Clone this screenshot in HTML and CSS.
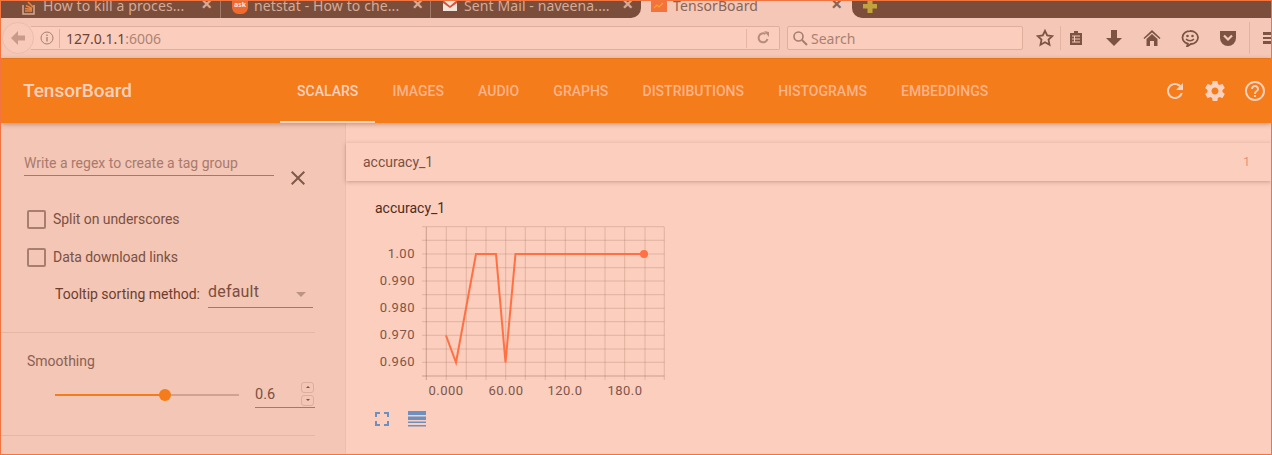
FILE: index.html
```html
<!DOCTYPE html>
<html lang="en">
<head>
    <meta charset="UTF-8">
    <title>TensorBoard</title>
    <link rel="stylesheet" href="styles.css">
</head>
<body>
<div class="window">
    <!-- browser tabs -->
    <div class="tabstrip">
        <div class="tabs-back">
            <div class="tab tab-first">
                <svg class="favicon" viewBox="0 0 16 16"><path d="M2 5v9h11V5" fill="none" stroke="#d9a98f" stroke-width="1.5"/><path d="M4 11h7M4 8.5l7 1M5 5.500l6 3M7 2l5 5" fill="none" stroke="#e8853f" stroke-width="1.500"/></svg>
                <span class="tab-title">How to kill a proces...</span>
                <span class="tab-close">×</span>
            </div>
            <div class="tab">
                <svg class="favicon" viewBox="0 0 16 16"><path d="M0 -3h16v11a7 7 0 0 1-8 6a7 7 0 0 1-8-6z" fill="#ef6a2c"/><text x="8" y="7" class="ask-text">ask</text></svg>
                <span class="tab-title">netstat - How to che...</span>
                <span class="tab-close">×</span>
            </div>
            <div class="tab tab-last">
                <svg class="favicon" viewBox="0 0 16 16"><rect x="1" y="0" width="14" height="11" fill="#f4e3d8"/><path d="M1 0l7 6 7-6v3l-7 5-7-5z" fill="#d9503c"/></svg>
                <span class="tab-title">Sent Mail - naveena....</span>
                <span class="tab-close">×</span>
            </div>
        </div>
        <div class="tab tab-active">
            <svg class="favicon" viewBox="0 0 16 16"><rect width="16" height="12" fill="#f4723c"/><path d="M3 8l3-3 2 2 4-4" fill="none" stroke="#f5a623" stroke-width="1.200"/></svg>
            <span class="tab-title">TensorBoard</span>
            <span class="tab-close">×</span>
        </div>
        <div class="tabs-rest">
            <svg class="new-tab" viewBox="0 0 14 12"><path d="M4.500 0h5v3H14v4.500H9.500V12h-5V7.500H0V3h4.500z" fill="#c2a23c"/></svg>
        </div>
    </div>

    <!-- browser toolbar -->
    <div class="toolbar">
        <div class="back-btn">
            <svg viewBox="0 0 18 18" width="18" height="18"><path d="M9 2L2 9l7 7v-4.500h7v-5H9z" fill="#c99a89"/></svg>
        </div>
        <div class="urlbar">
            <svg class="info-icon" viewBox="0 0 14 14" width="14" height="14"><circle cx="7" cy="7" r="6" fill="none" stroke="#a57e70"/><path d="M7 6v4.500M7 3.500v1.500" stroke="#a57e70" stroke-width="1.300"/></svg>
            <span class="url"><b>127.0.1.1</b>:6006</span>
            <span class="url-reload">
                <svg viewBox="0 0 14 14" width="14" height="14"><path d="M11.500 8a4.500 4.500 0 1 1-2-5" fill="none" stroke="#b58c7d" stroke-width="2"/><path d="M8 0l5 1v5z" fill="#b58c7d"/></svg>
            </span>
        </div>
        <div class="searchbar">
            <svg viewBox="0 0 16 16" width="16" height="16"><circle cx="6.500" cy="6.500" r="4.500" fill="none" stroke="#a57e70" stroke-width="1.600"/><path d="M10 10l5 5" stroke="#a57e70" stroke-width="2"/></svg>
            <span>Search</span>
        </div>
        <div class="tool-icons">
            <svg class="ti ti-star" viewBox="0 0 18 18"><path d="M9 1.800l2.200 4.700 5 .6-3.700 3.500 1 5.100L9 13.200l-4.500 2.500 1-5.100L1.800 7.100l5-.6z" fill="none" stroke="#7d5444" stroke-width="1.800"/></svg>
            <span class="tool-sep"></span>
            <svg class="ti ti-list" viewBox="0 0 18 18"><path d="M3 4h4V2h4v2h4v12H3z" fill="#7d5444"/><path d="M5 7h8M5 10h8M5 13h8M7.500 7v6" stroke="#f4c7b6"/></svg>
            <svg class="ti ti-down" viewBox="0 0 18 18"><path d="M6 1h6v8h5l-8 8-8-8h5z" fill="#7d5444"/></svg>
            <svg class="ti ti-home" viewBox="0 0 18 18"><path d="M9 1l8.500 8-1 1L9 3.500 1.500 10l-1-1z" fill="#7d5444"/><path d="M3.500 10L9 5l5.500 5v7H11v-5H7v5H3.500z" fill="#7d5444"/></svg>
            <svg class="ti ti-smile" viewBox="0 0 18 18"><path d="M9 2a7.500 6.500 0 0 1 1 13l-4 2.500 .8-2.800A7.500 6.500 0 0 1 9 2z" fill="none" stroke="#7d5444" stroke-width="1.800"/><circle cx="6.500" cy="7" r="1.300" fill="#7d5444"/><circle cx="11.500" cy="7" r="1.300" fill="#7d5444"/><path d="M5 10c2 2.200 6 2.200 8 0" fill="none" stroke="#7d5444" stroke-width="1.500"/></svg>
            <svg class="ti ti-pocket" viewBox="0 0 18 18"><path d="M1 2h16v7a8 8 0 0 1-16 0z" fill="#7d5444"/><path d="M5 6.500l4 4 4-4" fill="none" stroke="#f4c7b6" stroke-width="2.200"/></svg>
            <span class="tool-sep tool-sep-last"></span>
            <span class="hamburger"></span>
        </div>
    </div>

    <!-- tensorboard header -->
    <header class="tb-header">
        <div class="tb-logo">TensorBoard</div>
        <nav class="tb-tabs">
            <a class="tb-tab active">Scalars</a>
            <a class="tb-tab">Images</a>
            <a class="tb-tab">Audio</a>
            <a class="tb-tab">Graphs</a>
            <a class="tb-tab">Distributions</a>
            <a class="tb-tab">Histograms</a>
            <a class="tb-tab">Embeddings</a>
        </nav>
        <div class="tb-actions">
            <svg viewBox="0 0 24 24"><path d="M17.65 6.350C16.200 4.900 14.210 4 12 4c-4.420 0-7.990 3.580-7.990 8s3.570 8 7.990 8c3.730 0 6.840-2.550 7.730-6h-2.080c-.82 2.330-3.040 4-5.650 4-3.310 0-6-2.690-6-6s2.690-6 6-6c1.660 0 3.140.69 4.220 1.780L13 11h7V4l-2.350 2.350z"/></svg>
            <svg viewBox="0 0 24 24"><path d="M19.430 12.980c.04-.32.07-.64.07-.98s-.03-.66-.07-.98l2.110-1.650c.19-.15.24-.42.12-.64l-2-3.460c-.12-.22-.39-.3-.61-.22l-2.490 1c-.52-.4-1.080-.73-1.690-.98l-.38-2.650C14.460 2.180 14.250 2 14 2h-4c-.25 0-.46.18-.49.42l-.38 2.650c-.61.25-1.170.59-1.690.98l-2.490-1c-.23-.09-.49 0-.61.22l-2 3.460c-.13.22-.07.49.12.64l2.110 1.650c-.04.32-.07.65-.07.98s.03.66.07.98l-2.110 1.650c-.19.15-.24.42-.12.64l2 3.460c.12.22.39.3.61.22l2.490-1c.52.4 1.080.73 1.690.98l.38 2.650c.03.24.24.42.49.42h4c.25 0 .46-.18.49-.42l.38-2.650c.61-.25 1.170-.59 1.690-.98l2.490 1c.23.09.49 0 .61-.22l2-3.460c.12-.22.07-.49-.12-.64l-2.110-1.650zM12 15.500c-1.930 0-3.500-1.570-3.500-3.500s1.570-3.500 3.500-3.500 3.500 1.570 3.500 3.500-1.570 3.500-3.500 3.500z"/></svg>
            <svg viewBox="0 0 24 24"><path d="M11 18h2v-2h-2v2zm1-16C6.480 2 2 6.480 2 12s4.480 10 10 10 10-4.480 10-10S17.520 2 12 2zm0 18c-4.410 0-8-3.590-8-8s3.590-8 8-8 8 3.590 8 8-3.590 8-8 8zm0-14c-2.210 0-4 1.790-4 4h2c0-1.100.9-2 2-2s2 .9 2 2c0 2-3 1.750-3 5h2c0-2.250 3-2.500 3-5 0-2.210-1.790-4-4-4z"/></svg>
        </div>
    </header>

    <div class="tb-body">
        <aside class="sidebar">
            <div class="side-top">
                <div class="regex-row">
                    <div class="regex-input">Write a regex to create a tag group</div>
                    <svg class="regex-clear" viewBox="0 0 24 24"><path d="M19 6.410L17.590 5 12 10.590 6.410 5 5 6.410 10.590 12 5 17.590 6.410 19 12 13.410 17.590 19 19 17.590 13.410 12z"/></svg>
                </div>
                <label class="check-row"><span class="checkbox"></span>Split on underscores</label>
                <label class="check-row"><span class="checkbox"></span>Data download links</label>
                <div class="tooltip-row">
                    <span class="tooltip-label">Tooltip sorting method:</span>
                    <span class="select">default<i class="select-arrow"></i></span>
                </div>
            </div>
            <div class="side-smooth">
                <div class="smooth-title">Smoothing</div>
                <div class="smooth-row">
                    <div class="slider"><span class="slider-fill"></span><span class="slider-thumb"></span></div>
                    <div class="num-input">
                        0.6
                        <span class="spinners"><i class="spin spin-up"></i><i class="spin spin-down"></i></span>
                    </div>
                </div>
            </div>
        </aside>

        <main class="main">
            <div class="section-head">
                <span>accuracy_1</span>
                <span class="section-count">1</span>
            </div>
            <div class="card">
                <div class="card-title">accuracy_1</div>
                <svg class="chart" viewBox="375 222 300 178" width="300" height="178">
                    <path class="grid" d="M446.300 227V380M466.300 227V380M486 227V380M505.700 227V380M525.300 227V380M545.300 227V380M565.300 227V380M585.300 227V380M605 227V380M624.700 227V380M645 227V380M664.300 227V380"/>
                    <path class="grid" d="M422 226.700H664.300M422 240.300H664.300M422 254H664.300M422 267.700H664.300M422 281H664.300M422 294.700H664.300M422 308.300H664.300M422 321.700H664.300M422 335.300H664.300M422 349H664.300M422 362.300H664.300"/>
                    <path class="axis" d="M426.300 227V380M422 376H664.300"/>
                    <polyline class="series" points="446,335.500 456,362.500 476,254 496,254 505.500,362.500 515.500,254 644,254"/>
                    <circle class="series-dot" cx="644" cy="254" r="4"/>
                    <g class="ylabels">
                        <text x="415" y="258">1.00</text>
                        <text x="415" y="285">0.990</text>
                        <text x="415" y="312">0.980</text>
                        <text x="415" y="339">0.970</text>
                        <text x="415" y="366">0.960</text>
                    </g>
                    <g class="xlabels">
                        <text x="446" y="395">0.000</text>
                        <text x="506" y="395">60.00</text>
                        <text x="565" y="395">120.0</text>
                        <text x="625" y="395">180.0</text>
                    </g>
                </svg>
                <div class="chart-tools">
                    <svg class="tool-full" viewBox="0 0 14 14"><path d="M0 0h5v2H2v3H0zM9 0h5v5h-2V2H9zM0 9h2v3h3v2H0zM12 9h2v5H9v-2h3z"/></svg>
                    <svg class="tool-lines" viewBox="0 0 18 16"><path d="M0 0h18v4H0zM0 5.500h18V9H0zM0 10.500h18V12H0zM0 14h18v1.500H0z"/></svg>
                </div>
            </div>
        </main>
    </div>
</div>
</body>
</html>
```

FILE: styles.css
```css
html, body {
    margin: 0;
    height: 100%;
    overflow: hidden;
}
body {
    font-family: Roboto, sans-serif;
    font-size: 14px;
    color: #6e3f30;
}
.window {
    box-sizing: border-box;
    width: 1272px;
    height: 455px;
    border: 1px solid #f4743f;
    overflow: hidden;
    background: #fbcebd;
    display: flex;
    flex-direction: column;
}

/* browser tabs */
.tabstrip {
    height: 17px;
    flex: none;
    display: flex;
    background: #f4c7b6;
    overflow: hidden;
    font-family: "Noto Sans", sans-serif;
}
.tabs-back {
    width: 640px;
    flex: none;
    display: flex;
    background: #7b4e3c;
    border-bottom-right-radius: 10px;
}
.tabs-rest {
    flex: 1;
    background: #7b4e3c;
    border-bottom-left-radius: 10px;
    padding-left: 11px;
}
.tab {
    width: 210px;
    height: 17px;
    flex: none;
    box-sizing: border-box;
    padding-left: 11px;
    display: flex;
    color: #d8a993;
    border-right: 1px solid #a27a68;
}
.tab-first {
    width: 220px;
    padding-left: 20px;
}
.tab-last {
    border-right: none;
}
.tab-active {
    width: 211px;
    color: #8a6455;
    border-right: none;
    padding-left: 10px;
}
.favicon {
    width: 16px;
    height: 16px;
    flex: none;
    margin-top: -1px;
}
.ask-text {
    font-family: "Noto Sans", sans-serif;
    font-size: 7px;
    font-weight: bold;
    text-anchor: middle;
    fill: #fbe3d6;
}
.tab-title {
    margin-left: 6px;
    width: 154px;
    font-size: 14px;
    line-height: 9px;
    white-space: nowrap;
    letter-spacing: 0.1px;
}
.tab-close {
    font-size: 20px;
    line-height: 6px;
    font-weight: bold;
    margin-left: 4px;
}
.new-tab {
    width: 14px;
    height: 12px;
    display: block;
}

/* browser toolbar */
.toolbar {
    height: 41px;
    flex: none;
    box-sizing: border-box;
    display: flex;
    align-items: center;
    background: #f4c7b6;
    border-bottom: 1px solid #f57c1a;
    font-family: "Noto Sans", sans-serif;
}
.back-btn {
    width: 30px;
    height: 30px;
    flex: none;
    margin-left: 1px;
    border: 1px solid #ecbdac;
    border-radius: 50%;
    background: #f8cab9;
    display: flex;
    align-items: center;
    justify-content: center;
    position: relative;
    z-index: 1;
}
.urlbar {
    width: 749px;
    height: 24px;
    flex: none;
    box-sizing: border-box;
    margin-left: -3px;
    padding-left: 9px;
    display: flex;
    align-items: center;
    background: #fbcdbc;
    border: 1px solid #e0ae9d;
    border-left: none;
    border-radius: 0 2px 2px 0;
}
.info-icon {
    flex: none;
}
.url {
    margin-left: 5px;
    padding-left: 6px;
    border-left: 1px solid #e0ae9d;
    flex: 1;
    font-size: 14px;
    line-height: 19px;
    color: #ac8475;
}
.url b {
    font-weight: normal;
    color: #6b4436;
}
.url-reload {
    width: 32px;
    height: 19px;
    display: flex;
    align-items: center;
    justify-content: center;
    border-left: 1px solid #e6b5a4;
}
.searchbar {
    width: 236px;
    height: 24px;
    flex: none;
    box-sizing: border-box;
    margin-left: 7px;
    padding-left: 4px;
    display: flex;
    align-items: center;
    gap: 3px;
    background: #fbcdbc;
    border: 1px solid #e0ae9d;
    border-radius: 2px;
    font-size: 14px;
    color: #a98172;
}
.tool-icons {
    flex: 1;
    min-width: 0;
    display: flex;
    align-items: center;
    margin-left: 13px;
}
.ti {
    width: 18px;
    height: 18px;
    flex: none;
}
.tool-sep {
    width: 1px;
    height: 24px;
    flex: none;
    background: #e3b3a2;
    margin: 0 6px 0 6px;
}
.ti-down, .ti-home, .ti-smile, .ti-pocket {
    margin-left: 20px;
}
.tool-sep-last {
    margin: 0 0 0 12px;
    height: 32px;
}
.hamburger {
    width: 8px;
    height: 12px;
    flex: none;
    margin-left: 13px;
    background: linear-gradient(#7d5444 0 3px, transparent 3px 5px, #7d5444 5px 7px, transparent 7px 9px, #7d5444 9px 12px);
}

/* tensorboard header */
.tb-header {
    height: 64px;
    flex: none;
    display: flex;
    background: #f57c1a;
    box-shadow: 0 1px 5px rgba(120, 60, 30, 0.45);
    position: relative;
    z-index: 2;
}
.tb-logo {
    width: 279px;
    padding-left: 22px;
    box-sizing: border-box;
    font-size: 19px;
    font-weight: 500;
    line-height: 64px;
    color: #fcd2bf;
}
.tb-tabs {
    display: flex;
    height: 64px;
}
.tb-tab {
    padding: 0 17.1px;
    font-size: 14px;
    font-weight: 500;
    line-height: 64px;
    text-transform: uppercase;
    color: #fbb48a;
}
.tb-tab.active {
    color: #fcd2bf;
    box-shadow: inset 0 -2px 0 #fcd2bf;
}
.tb-actions {
    margin-left: auto;
    margin-right: 4px;
    display: flex;
    align-items: center;
    gap: 16px;
}
.tb-actions svg {
    width: 24px;
    height: 24px;
    fill: #fcd2bf;
}

/* sidebar */
.tb-body {
    flex: 1;
    display: flex;
    min-height: 0;
}
.sidebar {
    width: 345px;
    flex: none;
    box-sizing: border-box;
    background: #f3c6b6;
    border-right: 1px solid #eebdab;
}
.side-top {
    width: 314px;
    height: 210px;
    box-sizing: border-box;
    border-bottom: 1px solid #e6b6a5;
    padding: 31px 0 0 23px;
}
.regex-row {
    display: flex;
    height: 50px;
}
.regex-input {
    width: 250px;
    height: 21px;
    line-height: 18px;
    border-bottom: 1px solid #a4786a;
    color: #a97a6c;
}
.regex-clear {
    width: 24px;
    height: 24px;
    fill: #80594b;
    margin: 12px 0 0 12px;
}
.check-row {
    display: flex;
    align-items: center;
    height: 18px;
    margin: 6px 0 20px 3px;
    letter-spacing: -0.05px;
    color: #7c5042;
}
.checkbox {
    width: 15px;
    height: 15px;
    margin-right: 7px;
    border: 2px solid #a87e70;
    border-radius: 2px;
}
.tooltip-row {
    display: flex;
    margin: -4px 0 0 31px;
}
.tooltip-label {
    width: 153px;
    line-height: 24px;
    color: #6e3d2e;
}
.select {
    width: 105px;
    height: 25px;
    position: relative;
    font-size: 16px;
    line-height: 20px;
    letter-spacing: 0.2px;
    border-bottom: 1px solid #a4786a;
    color: #7c4e3f;
}
.select-arrow {
    position: absolute;
    right: 7px;
    top: 10px;
    border-left: 5px solid transparent;
    border-right: 5px solid transparent;
    border-top: 5px solid #bd9384;
}
.side-smooth {
    width: 314px;
    height: 103px;
    box-sizing: border-box;
    border-bottom: 1px solid #e6b6a5;
    padding: 20px 0 0 26px;
}
.smooth-title {
    line-height: 17px;
    color: #8a6153;
}
.smooth-row {
    display: flex;
    margin: 12px 0 0 28px;
}
.slider {
    width: 184px;
    height: 2px;
    margin-top: 12px;
    background: #cfa292;
    position: relative;
}
.slider-fill {
    display: block;
    width: 110px;
    height: 2px;
    background: #f57c1a;
}
.slider-thumb {
    position: absolute;
    left: 104px;
    top: -5px;
    width: 12px;
    height: 12px;
    border-radius: 50%;
    background: #f57c1a;
}
.num-input {
    width: 60px;
    height: 25px;
    margin-left: 16px;
    position: relative;
    font-size: 14.500px;
    line-height: 26px;
    border-bottom: 1px solid #a4786a;
    color: #7c5042;
}
.spinners {
    position: absolute;
    right: 1px;
    top: 0;
    display: flex;
    flex-direction: column;
    gap: 2px;
}
.spin {
    width: 11px;
    height: 9px;
    border: 1px solid #dcae9e;
    border-radius: 3px;
    position: relative;
}
.spin::after {
    content: "";
    position: absolute;
    left: 3.500px;
    top: 3px;
    border-left: 2px solid transparent;
    border-right: 2px solid transparent;
}
.spin-up::after {
    border-bottom: 2px solid #7c5042;
}
.spin-down::after {
    border-top: 2px solid #7c5042;
}

/* main column */
.main {
    flex: 1;
    min-width: 0;
    padding-top: 20px;
}
.section-head {
    height: 38px;
    box-sizing: border-box;
    padding: 0 21px 0 17px;
    display: flex;
    justify-content: space-between;
    align-items: center;
    color: #7c5042;
    background: #fbcebd;
    box-shadow: 0 1px 4px rgba(120, 60, 30, 0.35);
}
.section-count {
    font-size: 12px;
    color: #e8907a;
}
.card {
    padding: 19px 0 0 29px;
}
.card-title {
    height: 22px;
    line-height: 17px;
    color: #4f2a1e;
}
.chart {
    display: block;
}
.grid {
    fill: none;
    stroke: #7a4632;
    stroke-opacity: 0.2;
    stroke-width: 1;
}
.axis {
    fill: none;
    stroke: #7a4632;
    stroke-opacity: 0.35;
    stroke-width: 1;
}
.series {
    fill: none;
    stroke: #ff7043;
    stroke-width: 2;
}
.series-dot {
    fill: #ff7043;
}
.chart text {
    font-size: 13px;
    letter-spacing: 0.5px;
    fill: #80564a;
}
.ylabels text {
    text-anchor: end;
}
.xlabels text {
    text-anchor: middle;
}
.chart-tools {
    display: flex;
    align-items: center;
    margin-top: 11px;
    gap: 19px;
}
.tool-full {
    width: 14px;
    height: 14px;
    fill: #6d90c0;
}
.tool-lines {
    width: 18px;
    height: 16px;
    fill: #6d90c0;
}
```
